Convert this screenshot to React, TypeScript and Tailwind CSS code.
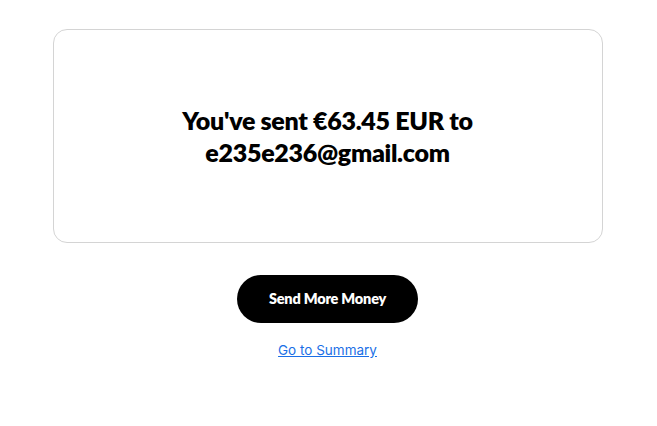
export default function App() {
  return (
    <div className="min-h-screen bg-white flex flex-col items-center pt-[29px] pr-[2px]" style={{ fontFamily: "Lato, 'Noto Sans', sans-serif" }}>
      <div className="w-[550px] h-[214px] border border-[#d4d4d4] rounded-[14px] flex items-center justify-center px-10">
        <h1 className="text-[25px] leading-[32px] font-extrabold text-black text-center tracking-[-0.3px]">
          You've sent €63.45 EUR to
          <br />
          e235e236@gmail.com
        </h1>
      </div>
      <button className="mt-[32px] w-[181px] h-[48px] rounded-full bg-black text-white text-[14.5px] font-extrabold tracking-[-0.2px]">
        Send More Money
      </button>
      <a href="#" className="mt-[17px] text-[13.5px] text-[#1a6fe6] underline" style={{ fontFamily: "Inter, sans-serif" }}>
        Go to Summary
      </a>
    </div>
  );
}
